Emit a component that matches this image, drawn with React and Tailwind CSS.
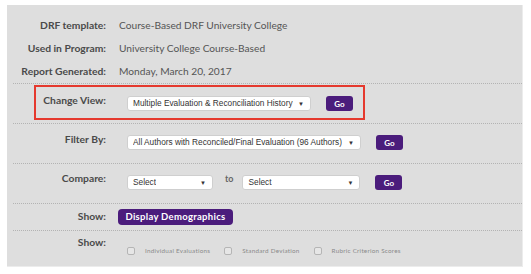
import React from "react";

const Caret = () => (
  <span className="text-[6px] leading-none text-[#333] shrink-0 ml-[2px]">▼</span>
);

const Select = ({ text, w }) => (
  <div
    className={`${w} h-[15px] bg-white rounded-[3px] border border-[#cfcfcf] flex items-center justify-between pl-[5px] pr-[6px] text-[8.3px] text-[#333] font-['Liberation_Sans',Arial,sans-serif]`}
  >
    <span className="whitespace-nowrap overflow-hidden">{text}</span>
    <Caret />
  </div>
);

const GoButton = ({ className = "" }) => (
  <button
    className={`w-[27px] h-[15px] rounded-[3px] bg-[#4b1c7c] text-white text-[8px] font-bold leading-none flex items-center justify-center ${className}`}
  >
    Go
  </button>
);

const Checkbox = ({ label }) => (
  <div className="flex items-center">
    <span className="w-[8px] h-[8px] rounded-[2px] border border-[#b5b5b5] bg-[#e6e6e6]" />
    <span className="ml-[10px] text-[6.3px] tracking-[0.25px] text-[#8a8a8a]">{label}</span>
  </div>
);

const Sep = () => <div className="ml-[6px] border-t border-dotted border-[#b3b3b3]" />;

const info = [
  ["DRF template:", "Course-Based DRF University College"],
  ["Used in Program:", "University College Course-Based"],
  ["Report Generated:", "Monday, March 20, 2017"],
];

export default function App() {
  return (
    <div className="w-[531px] h-[274px] bg-white pt-[5px] pl-[7px] font-['Lato','Noto_Sans',sans-serif]">
      <div className="w-[516px] h-[262px] bg-[#dedede] border-r border-b border-[#ececec]">
        <div className="pt-[9px]">
          {info.map(([k, v]) => (
            <div key={k} className="flex h-[23px] items-center">
              <div className="w-[99px] text-right text-[10.3px] font-bold text-[#4a4a4a]">{k}</div>
              <div className="ml-[13px] text-[10.2px] text-[#555]">{v}</div>
            </div>
          ))}
        </div>
        <Sep />

        <div className="h-[39px] pt-[1px]">
          <div className="ml-[27px] w-[331px] h-[35px] border-2 border-[#e5392e] flex items-start pt-[9px]">
            <div className="w-[70px] text-right text-[10.3px] font-bold text-[#4a4a4a] leading-[14px] -mt-[3px]">
              Change View:
            </div>
            <div className="ml-[21px] flex items-center">
              <Select text="Multiple Evaluation & Reconciliation History" w="w-[184px]" />
              <GoButton className="ml-[15px]" />
            </div>
          </div>
        </div>
        <Sep />

        <div className="h-[39px] flex items-start pt-[11px]">
          <div className="w-[99px] text-right text-[10.3px] font-bold text-[#4a4a4a] leading-[14px] -mt-[3px]">
            Filter By:
          </div>
          <div className="ml-[21px] flex items-center">
            <Select text="All Authors with Reconciled/Final Evaluation (96 Authors)" w="w-[234px]" />
            <GoButton className="ml-[15px]" />
          </div>
        </div>
        <Sep />

        <div className="h-[39px] flex items-start pt-[11px]">
          <div className="w-[99px] text-right text-[10.3px] font-bold text-[#4a4a4a] leading-[14px] -mt-[4px]">
            Compare:
          </div>
          <div className="ml-[21px] flex items-center">
            <Select text="Select" w="w-[86px]" />
            <span className="ml-[12px] -mt-[7px] text-[9px] font-bold text-[#666]">to</span>
            <Select text="Select" w="w-[118px] ml-[9px]" />
            <GoButton className="ml-[15px]" />
          </div>
        </div>
        <Sep />

        <div className="h-[26px] flex items-center">
          <div className="w-[99px] text-right text-[10.3px] font-bold text-[#4a4a4a]">Show:</div>
          <button className="ml-[12px] h-[16px] w-[115px] rounded-[4px] bg-[#4b1c7c] text-white text-[9.5px] font-bold tracking-[0.3px] leading-none">
            Display Demographics
          </button>
        </div>
        <Sep />

        <div className="flex items-start pt-[4px]">
          <div className="w-[99px] text-right text-[10.3px] font-bold text-[#4a4a4a] leading-[14px]">Show:</div>
          <div className="ml-[21px] mt-[11px] flex items-center gap-[14px]">
            <Checkbox label="Individual Evaluations" />
            <Checkbox label="Standard Deviation" />
            <Checkbox label="Rubric Criterion Scores" />
          </div>
        </div>
      </div>
    </div>
  );
}
